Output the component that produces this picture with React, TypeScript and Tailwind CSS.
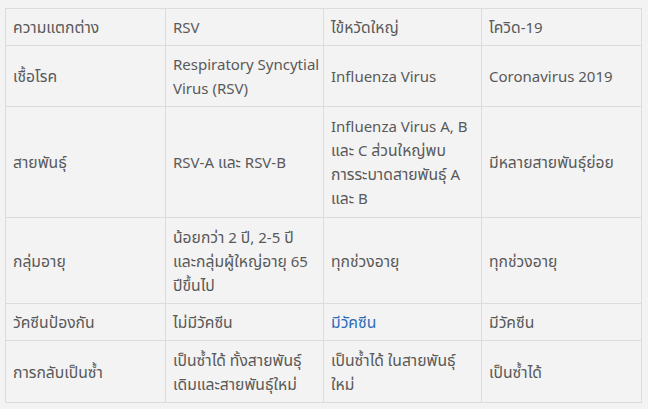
import React from 'react';

type Cell = { lines: string[]; link?: boolean };

const rows: Cell[][] = [
  [{ lines: ['ความแตกต่าง'] }, { lines: ['RSV'] }, { lines: ['ไข้หวัดใหญ่'] }, { lines: ['โควิด-19'] }],
  [
    { lines: ['เชื้อโรค'] },
    { lines: ['Respiratory Syncytial', 'Virus (RSV)'] },
    { lines: ['Influenza Virus'] },
    { lines: ['Coronavirus 2019'] },
  ],
  [
    { lines: ['สายพันธุ์'] },
    { lines: ['RSV-A และ RSV-B'] },
    { lines: ['Influenza Virus A, B', 'และ C ส่วนใหญ่พบ', 'การระบาดสายพันธุ์ A', 'และ B'] },
    { lines: ['มีหลายสายพันธุ์ย่อย'] },
  ],
  [
    { lines: ['กลุ่มอายุ'] },
    { lines: ['น้อยกว่า 2 ปี, 2-5 ปี', 'และกลุ่มผู้ใหญ่อายุ 65', 'ปีขึ้นไป'] },
    { lines: ['ทุกช่วงอายุ'] },
    { lines: ['ทุกช่วงอายุ'] },
  ],
  [{ lines: ['วัคซีนป้องกัน'] }, { lines: ['ไม่มีวัคซีน'] }, { lines: ['มีวัคซีน'], link: true }, { lines: ['มีวัคซีน'] }],
  [
    { lines: ['การกลับเป็นซ้ำ'] },
    { lines: ['เป็นซ้ำได้ ทั้งสายพันธุ์', 'เดิมและสายพันธุ์ใหม่'] },
    { lines: ['เป็นซ้ำได้ ในสายพันธุ์', 'ใหม่'] },
    { lines: ['เป็นซ้ำได้'] },
  ],
];

const rowHeights = ['h-[37px]', 'h-[61px]', 'h-[111px]', 'h-[86px]', 'h-[37px]', 'h-[62px]'];

// Thai glyphs in the reference run a little wider than the installed Thai face
function Mixed({ text }: { text: string }) {
  const parts = text.split(/([\u0E00-\u0E7F]+)/);
  return (
    <>
      {parts.map((p, i) =>
        /[\u0E00-\u0E7F]/.test(p) ? (
          <span key={i} className="text-[15.7px] leading-6">
            {p}
          </span>
        ) : (
          <React.Fragment key={i}>{p}</React.Fragment>
        )
      )}
    </>
  );
}

export default function App() {
  return (
    <div className="min-h-[409px] w-[648px] bg-[#f3f3f3] pl-[5px] pt-[8px] font-['Noto_Sans','Noto_Sans_Thai',sans-serif] text-[15px] leading-6 text-[#595959]">
      <table className="w-[636px] table-fixed border-collapse">
        <colgroup>
          <col className="w-[160px]" />
          <col className="w-[158px]" />
          <col className="w-[158px]" />
          <col className="w-[160px]" />
        </colgroup>
        <tbody>
          {rows.map((row, i) => (
            <tr key={i} className={rowHeights[i]}>
              {row.map((cell, j) => (
                <td key={j} className="border border-[#dcdcdc] py-[6px] pl-[7px] pr-[2px] align-middle">
                  {cell.lines.map((line, k) => (
                    <div key={k} className={cell.link ? 'whitespace-nowrap text-[#2b6cb8]' : 'whitespace-nowrap'}>
                      <Mixed text={line} />
                    </div>
                  ))}
                </td>
              ))}
            </tr>
          ))}
        </tbody>
      </table>
    </div>
  );
}
